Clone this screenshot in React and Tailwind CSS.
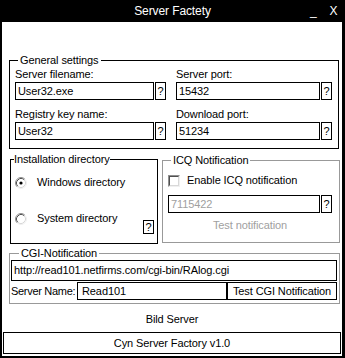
import React from 'react';

function Help({ tall }) {
    return (
        <div className={`w-[11px] border border-black flex items-center justify-center shrink-0 ${tall ? 'h-[18px]' : 'h-[14px]'}`}>
            ?
        </div>
    );
}

function TextBox({ value }) {
    return (
        <div className="flex gap-[1px]">
            <div className="flex-1 h-[18px] border border-black flex items-center pl-[2px]">{value}</div>
            <Help tall />
        </div>
    );
}

function Radio({ checked }) {
    return (
        <svg width="12" height="12" viewBox="0 0 12 12" className="shrink-0">
            <circle cx="6" cy="6" r="5" fill="#fff" />
            <path d="M2.11 9.89 A5.5 5.5 0 0 1 9.89 2.11" fill="none" stroke="#909090" />
            <path d="M9.89 2.11 A5.5 5.5 0 0 1 2.11 9.89" fill="none" stroke="#f0f0f0" />
            <path d="M2.82 9.18 A4.5 4.5 0 0 1 9.18 2.82" fill="none" stroke="#505050" />
            <path d="M9.18 2.82 A4.5 4.5 0 0 1 2.82 9.18" fill="none" stroke="#d8d8d8" />
            {checked && <circle cx="6" cy="6" r="1.6" fill="#000" />}
        </svg>
    );
}

export default function App() {
    return (
        <div className="w-[345px] h-[358px] bg-black flex flex-col font-['Liberation_Sans',Arial,sans-serif] text-[11px] leading-[13px] tracking-[-0.1px] text-black overflow-hidden whitespace-nowrap">
            {/* title bar */}
            <div className="h-[22px] flex items-center text-white text-[12px] shrink-0">
                <div className="w-[50px]" />
                <div className="flex-1 text-center">Server Factety</div>
                <div className="w-[50px] flex items-center">
                    <span className="ml-[15px] leading-[12px]">_</span>
                    <span className="ml-[13px]">X</span>
                </div>
            </div>

            <div className="flex-1 ml-[2px] mr-[3px] mb-[2px] bg-white flex flex-col">
                {/* General settings */}
                <fieldset className="mt-[32px] ml-[7px] w-[330px] border border-black pl-[5px] pr-[6px] pb-[8px]">
                    <legend className="ml-[3px] px-[2px]">General settings</legend>
                    <div className="grid grid-cols-[151px_156px] gap-x-[10px]">
                        <div className="flex flex-col">
                            <div className="mt-[1px]">Server filename:</div>
                            <div className="mt-[1px]"><TextBox value="User32.exe" /></div>
                            <div className="mt-[8px]">Registry key name:</div>
                            <div className="mt-[1px]"><TextBox value="User32" /></div>
                        </div>
                        <div className="flex flex-col">
                            <div className="mt-[1px]">Server port:</div>
                            <div className="mt-[1px]"><TextBox value="15432" /></div>
                            <div className="mt-[8px]">Download port:</div>
                            <div className="mt-[1px]"><TextBox value="51234" /></div>
                        </div>
                    </div>
                </fieldset>

                <div className="flex items-start mt-[4px] ml-[8px]">
                    {/* Installation directory */}
                    <fieldset className="w-[148px] border border-black pl-[4px] pr-[3px] pb-[9px]">
                        <legend className="ml-[-1px]">Installation directory</legend>
                        <div className="mt-[10px] flex items-center gap-[10px]">
                            <Radio checked />
                            <span>Windows directory</span>
                        </div>
                        <div className="mt-[23px] flex items-start">
                            <div className="flex items-center gap-[10px]">
                                <Radio />
                                <span>System directory</span>
                            </div>
                            <div className="ml-auto mt-[8px]"><Help /></div>
                        </div>
                    </fieldset>

                    {/* ICQ Notification */}
                    <fieldset className="ml-[4px] mt-[1px] w-[178px] border border-[#999999] pl-[5px] pr-[7px] pb-[10px]">
                        <legend className="ml-[3px] px-[2px]">ICQ Notification</legend>
                        <div className="mt-[7px] flex items-center gap-[7px]">
                            <div className="w-[12px] h-[12px] border border-t-[#909090] border-l-[#909090] border-b-[#f0f0f0] border-r-[#f0f0f0]">
                                <div className="w-full h-full border border-t-[#505050] border-l-[#505050] border-b-[#d8d8d8] border-r-[#d8d8d8] bg-white" />
                            </div>
                            <span>Enable ICQ notification</span>
                        </div>
                        <div className="mt-[8px] flex gap-[1px]">
                            <div className="flex-1 h-[18px] border border-black flex items-center pl-[2px] text-[#a0a0a0]">7115422</div>
                            <Help tall />
                        </div>
                        <div className="mt-[6px] text-center text-[#a0a0a0]">Test notification</div>
                    </fieldset>
                </div>

                {/* CGI-Notification */}
                <fieldset className="mt-[3px] ml-[7px] w-[331px] border border-[#999999] pl-[1px] pr-[2px] pb-[3px]">
                    <legend className="ml-[8px] px-[2px]">CGI-Notification</legend>
                    <div className="h-[21px] border border-black flex items-center pl-[2px]">
                        http://read101.netfirms.com/cgi-bin/RAlog.cgi
                    </div>
                    <div className="mt-[1px] flex h-[18px]">
                        <div className="w-[66px] flex items-center tracking-[-0.3px]">Server Name:</div>
                        <div className="flex-1 border border-black flex items-center pl-[4px]">Read101</div>
                        <div className="w-[110px] border border-black flex items-center justify-center">Test CGI Notification</div>
                    </div>
                </fieldset>

                <div className="mt-[9px] text-center">Bild Server</div>

                <div className="mt-[6px] mx-[1px] h-[22px] border border-black flex items-center justify-center">
                    Cyn Server Factory v1.0
                </div>
            </div>
        </div>
    );
}
